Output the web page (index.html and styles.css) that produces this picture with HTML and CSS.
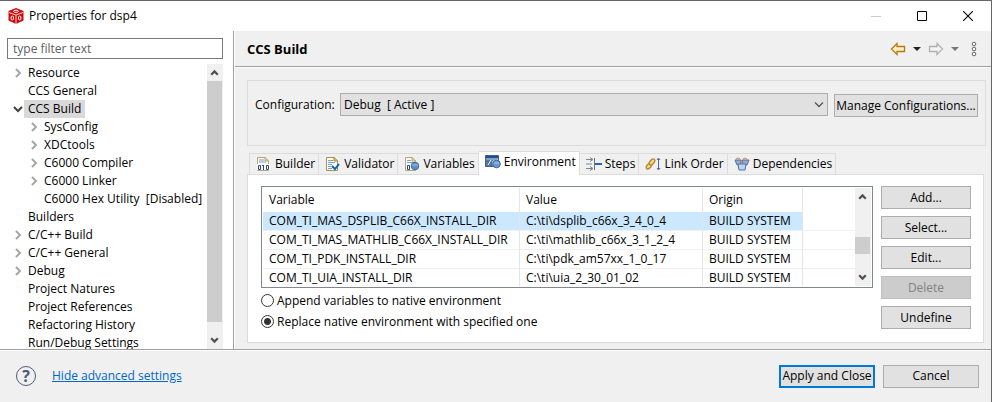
FILE: index.html
```
<!DOCTYPE html>
<html lang="en">
<head>
    <meta charset="UTF-8">
    <meta name="viewport" content="width=device-width, initial-scale=1.0">
    <title>Properties for dsp4</title>
    <link rel="stylesheet" href="styles.css">
</head>
<body>
    <!-- shared chevrons -->
    <svg class="defs" aria-hidden="true">
        <symbol id="chev-right" viewBox="0 0 8 10"><path d="M2 1l4 4-4 4" fill="none" stroke="#a6a6a6" stroke-width="2"/></symbol>
        <symbol id="chev-open" viewBox="0 0 10 8"><path d="M1 2l4 4 4-4" fill="none" stroke="#404040" stroke-width="2"/></symbol>
        <symbol id="chev-up" viewBox="0 0 10 8"><path d="M2 6l3-3 3 3" fill="none" stroke="#505050" stroke-width="2"/></symbol>
        <symbol id="chev-down" viewBox="0 0 10 8"><path d="M2 2l3 3 3-3" fill="none" stroke="#505050" stroke-width="2"/></symbol>
    </svg>

    <div class="window">
        <header class="titlebar">
            <svg class="app-icon" viewBox="0 0 16 16">
                <path d="M8 0l7.500 3v9.500L8 16 .5 12.500V3z" fill="#cc0a0a"/>
                <path d="M1 4.500l7 2.500 7-2.500M8 7v9" fill="none" stroke="#fff" stroke-width=".8"/>
                <ellipse cx="8" cy="3.300" rx="2.500" ry="1.100" fill="none" stroke="#fff"/>
                <ellipse cx="4.300" cy="10" rx="1.300" ry="2" fill="none" stroke="#fff"/>
                <ellipse cx="11.700" cy="10" rx="1.300" ry="2" fill="none" stroke="#fff"/>
            </svg>
            <h1 class="title">Properties for dsp4</h1>
            <div class="window-controls">
                <button aria-label="Minimize" disabled><svg width="10" height="10"><path d="M0 5.500h10" stroke="#ccc"/></svg></button>
                <button aria-label="Maximize"><svg width="10" height="10"><path d="M.5.5h9v9h-9z" fill="none" stroke="#000"/></svg></button>
                <button aria-label="Close"><svg width="10" height="10"><path d="M0 0l10 10M10 0L0 10" stroke="#000" stroke-width="1.100"/></svg></button>
            </div>
        </header>

        <main class="main">
            <nav class="sidebar">
                <input class="filter" type="text" placeholder="type filter text" aria-label="Filter">
                <div class="tree-box">
                    <ul class="tree">
                        <li><svg class="twist"><use href="#chev-right"/></svg><span>Resource</span></li>
                        <li><i class="twist"></i><span>CCS General</span></li>
                        <li><svg class="twist open"><use href="#chev-open"/></svg><span class="selected">CCS Build</span></li>
                        <li class="child"><svg class="twist"><use href="#chev-right"/></svg><span>SysConfig</span></li>
                        <li class="child"><svg class="twist"><use href="#chev-right"/></svg><span>XDCtools</span></li>
                        <li class="child"><svg class="twist"><use href="#chev-right"/></svg><span>C6000 Compiler</span></li>
                        <li class="child"><svg class="twist"><use href="#chev-right"/></svg><span>C6000 Linker</span></li>
                        <li class="child"><i class="twist"></i><span>C6000 Hex Utility&nbsp; [Disabled]</span></li>
                        <li><i class="twist"></i><span>Builders</span></li>
                        <li><svg class="twist"><use href="#chev-right"/></svg><span>C/C++ Build</span></li>
                        <li><svg class="twist"><use href="#chev-right"/></svg><span>C/C++ General</span></li>
                        <li><svg class="twist"><use href="#chev-right"/></svg><span>Debug</span></li>
                        <li><i class="twist"></i><span>Project Natures</span></li>
                        <li><i class="twist"></i><span>Project References</span></li>
                        <li><i class="twist"></i><span>Refactoring History</span></li>
                        <li><i class="twist"></i><span>Run/Debug Settings</span></li>
                    </ul>
                    <div class="scrollbar">
                        <svg class="arrow"><use href="#chev-up"/></svg>
                        <div class="track"><div class="thumb tree-thumb"></div></div>
                        <svg class="arrow"><use href="#chev-down"/></svg>
                    </div>
                </div>
            </nav>

            <section class="page">
                <div class="page-header">
                    <h2>CCS Build</h2>
                    <div class="history">
                        <button aria-label="Back"><svg width="16" height="14" viewBox="0 0 16 14"><path d="M1.500 7L7 1.500v3h7.500v5H7v3z" fill="#fff1c4" stroke="#b9770e" stroke-width="1.300"/></svg></button>
                        <button aria-label="Back history"><svg width="8" height="4"><path d="M0 0h8L4 4z" fill="#222"/></svg></button>
                        <button aria-label="Forward"><svg width="16" height="14" viewBox="0 0 16 14"><path d="M14.500 7L9 1.500v3H1.500v5H9v3z" fill="#f4f4f4" stroke="#b0b0b0" stroke-width="1.300"/></svg></button>
                        <button aria-label="Forward history"><svg width="8" height="4"><path d="M0 0h8L4 4z" fill="#777"/></svg></button>
                        <button class="menu" aria-label="Menu"><svg width="6" height="16" viewBox="0 0 6 16" fill="#fff" stroke="#666"><circle cx="3" cy="3" r="1.800"/><circle cx="3" cy="8" r="1.800"/><circle cx="3" cy="13" r="1.800"/></svg></button>
                    </div>
                </div>

                <div class="config">
                    <label for="config">Configuration:</label>
                    <div class="select-wrap">
                        <select id="config"><option>Debug&nbsp; [ Active ]</option></select>
                        <svg class="select-arrow" width="10" height="6"><path d="M1 .5l4 4 4-4" fill="none" stroke="#555" stroke-width="1.300"/></svg>
                    </div>
                    <button class="btn manage">Manage Configurations...</button>
                </div>

                <div class="tabs" role="tablist">
                    <button class="tab" role="tab">
                        <svg viewBox="0 0 16 16"><path d="M1.500 1.500h8l3 3v10h-11z" fill="#fbf9ee" stroke="#b5a782"/><path d="M9 1v4h4" fill="#e6cd84" stroke="#b5a782"/><path d="M3 4h5M3 6h7" stroke="#7d9fcb"/><path d="M1 8h13v6H1z" fill="#fff"/><path d="M2.500 9.500h2v4h-2zM10.500 9.500h2v4h-2zM7.500 9v5M6 9.500h1" fill="none" stroke="#274b85"/></svg>
                        Builder
                    </button>
                    <button class="tab" role="tab">
                        <svg viewBox="0 0 16 16"><path d="M1.500 1.500h8l3 3v10h-11z" fill="#fbf9ee" stroke="#a3915f"/><path d="M9 1v4h4" fill="#e6b95c" stroke="#b08838"/><path d="M3 4.500h5M3 6.500h7M3 8.500h4M3 10.500h3M3 12.500h4" stroke="#7d9fcb"/><path d="M7 10l3 3 4-5" fill="none" stroke="#0b63b5" stroke-width="2"/></svg>
                        Validator
                    </button>
                    <button class="tab" role="tab">
                        <svg viewBox="0 0 16 16"><path d="M1.500 1.500h7l3 3v10h-10z" fill="#fbf9ee" stroke="#b5a782"/><path d="M8 1v4h4" fill="#e6cd84" stroke="#b5a782"/><path d="M3 4.500h4M3 6.500h6" stroke="#7d9fcb"/><path d="M3.500 9.500h2v4h-2z" fill="#fff" stroke="#274b85"/><circle cx="11" cy="10" r="3.800" fill="#5f8fc5" stroke="#3b6aa5"/><path d="M8 9h6" stroke="#9fc0e4"/></svg>
                        Variables
                    </button>
                    <button class="tab active" role="tab" aria-selected="true">
                        <svg viewBox="0 0 16 16"><path d="M.5 1.500h13v11H.5z" fill="#55779f" stroke="#3f5f8d"/><path d="M1 2h12v2H1z" fill="#1e4f91"/><path d="M1 5h12" stroke="#b9cbe0"/><path d="M3 11l3-5M8 11V7l5-1" fill="none" stroke="#fff"/><circle cx="11.500" cy="10" r="3.800" fill="#6a9acd" stroke="#3b6aa5"/><path d="M9 9h5" stroke="#a7c6e8"/></svg>
                        Environment
                    </button>
                    <button class="tab" role="tab">
                        <svg viewBox="0 0 16 16"><path d="M0 3.500h6M0 8h6M0 12.500h6M4 1.500l3 2-3 2M4 10.500l3 2-3 2" fill="none" stroke="#7b858c"/><path d="M8.500 2v12" stroke="#6b757c"/><path d="M9 8h7" stroke="#2166ad" stroke-width="2"/></svg>
                        Steps
                    </button>
                    <button class="tab" role="tab">
                        <svg viewBox="0 0 16 16"><g fill="#f3d98e" stroke="#b5882a" stroke-width="1.300"><ellipse cx="4" cy="10" rx="3.500" ry="2" transform="rotate(-50 4 10)"/><ellipse cx="7" cy="6" rx="3.500" ry="2" transform="rotate(-50 7 6)"/></g><path d="M13.500 3v10M12 4l1.500-2L15 4M12 12l1.500 2 1.500-2" fill="none" stroke="#4c6c9d"/></svg>
                        Link Order
                    </button>
                    <button class="tab" role="tab">
                        <svg viewBox="0 0 16 16"><g stroke="#586f9f"><path d="M1 4h6v5H3z" fill="#94abd1"/><path d="M8 4h7l-2 5H9z" fill="#94abd1"/><path d="M4 8h8l-1 6H5z" fill="#b7d7f4"/></g><path d="M2 3q2-2 4 0M9 3q2-2 4 0M6 7q2-2 4 0" fill="none" stroke="#c18d5f"/></svg>
                        Dependencies
                    </button>
                </div>

                <div class="panel">
                    <div class="panel-left">
                        <div class="table-box">
                            <div class="table-view">
                                <table>
                                    <colgroup><col class="col-var"><col class="col-val"><col class="col-origin"><col></colgroup>
                                    <thead>
                                        <tr><th>Variable</th><th>Value</th><th>Origin</th><th></th></tr>
                                    </thead>
                                    <tbody>
                                        <tr class="selected"><td>COM_TI_MAS_DSPLIB_C66X_INSTALL_DIR</td><td>C:\ti\dsplib_c66x_3_4_0_4</td><td>BUILD SYSTEM</td><td></td></tr>
                                        <tr><td>COM_TI_MAS_MATHLIB_C66X_INSTALL_DIR</td><td>C:\ti\mathlib_c66x_3_1_2_4</td><td>BUILD SYSTEM</td><td></td></tr>
                                        <tr><td>COM_TI_PDK_INSTALL_DIR</td><td>C:\ti\pdk_am57xx_1_0_17</td><td>BUILD SYSTEM</td><td></td></tr>
                                        <tr><td>COM_TI_UIA_INSTALL_DIR</td><td>C:\ti\uia_2_30_01_02</td><td>BUILD SYSTEM</td><td></td></tr>
                                    </tbody>
                                </table>
                            </div>
                            <div class="scrollbar">
                                <svg class="arrow"><use href="#chev-up"/></svg>
                                <div class="track"><div class="thumb table-thumb"></div></div>
                                <svg class="arrow"><use href="#chev-down"/></svg>
                            </div>
                        </div>
                        <label class="radio"><input type="radio" name="env"> Append variables to native environment</label>
                        <label class="radio"><input type="radio" name="env" checked> Replace native environment with specified one</label>
                    </div>
                    <div class="actions">
                        <button class="btn">Add...</button>
                        <button class="btn">Select...</button>
                        <button class="btn">Edit...</button>
                        <button class="btn" disabled>Delete</button>
                        <button class="btn">Undefine</button>
                    </div>
                </div>
            </section>
        </main>

        <footer class="footer">
            <button class="help" aria-label="Help">?</button>
            <a href="#">Hide advanced settings</a>
            <div class="footer-buttons">
                <button class="btn primary">Apply and Close</button>
                <button class="btn">Cancel</button>
            </div>
        </footer>
    </div>
</body>
</html>
```
FILE: styles.css
```
* {
    margin: 0;
    padding: 0;
    box-sizing: border-box;
}

body,
button,
input,
select {
    font-family: "Open Sans", "Noto Sans", sans-serif;
    font-size: 12px;
    line-height: 18px;
    color: #000;
}

button {
    border: none;
    background: none;
    white-space: nowrap;
}

svg {
    display: block;
    flex: none;
}

.defs {
    position: absolute;
    width: 0;
    height: 0;
}

.window {
    display: flex;
    flex-direction: column;
    height: 100vh;
    background: #f0f0f0;
    border-top: 1px solid #666;
    border-right: 1px solid #666;
    overflow: hidden;
}

/* title bar */
.titlebar {
    display: flex;
    align-items: center;
    flex: none;
    height: 30px;
    padding-left: 8px;
    gap: 5px;
    background: #fff;
}

.app-icon {
    width: 16px;
    height: 16px;
}

.title {
    font-size: 12px;
    font-weight: normal;
}

.window-controls {
    display: flex;
    margin-left: auto;
}

.window-controls button {
    display: flex;
    align-items: center;
    justify-content: center;
    width: 46px;
    height: 28px;
}

.main {
    display: flex;
    flex: 1;
    min-height: 0;
}

/* category tree */
.sidebar {
    display: flex;
    flex-direction: column;
    flex: none;
    width: 234px;
    padding: 7px 10px 0 7px;
    background: #fff;
    border-right: 1px solid #a0a0a0;
}

.filter {
    flex: none;
    height: 21px;
    padding: 0 5px;
    border: 1px solid #7a7a7a;
}

.filter::placeholder {
    color: #606060;
    opacity: 1;
}

.tree-box {
    display: flex;
    flex: 1;
    min-height: 0;
    padding-top: 5px;
}

.tree {
    flex: 1;
    min-width: 0;
    overflow: hidden;
    list-style: none;
}

.tree li {
    display: flex;
    align-items: center;
    height: 18px;
    padding-left: 6px;
    gap: 1px;
    white-space: nowrap;
}

.tree .child {
    padding-left: 22px;
}

.tree span {
    padding: 0 4px;
}

.tree .selected {
    background: #d9d9d9;
}

.twist {
    width: 10px;
    height: 10px;
}

.scrollbar {
    display: flex;
    flex-direction: column;
    flex: none;
    width: 16px;
    background: #f0f0f0;
}

.arrow {
    width: 15px;
    height: 17px;
    padding: 4px 2px;
}

.track {
    flex: 1;
    display: flex;
    flex-direction: column;
}

.thumb {
    width: 15px;
    background: #cdcdcd;
}

.tree-thumb {
    height: 96%;
}

.table-thumb {
    height: 17px;
    margin-top: 32px;
}

/* page */
.page {
    flex: 1;
    min-width: 0;
    padding-right: 5px;
    border-left: 1px solid #fff;
}

.page-header {
    display: flex;
    align-items: center;
    justify-content: space-between;
    height: 36px;
    margin-right: -5px;
    padding: 0 14px 0 12px;
    border-bottom: 1px solid #a0a0a0;
    box-shadow: 0 1px #fff;
}

.page-header h2 {
    font-size: 13px;
}

.history {
    display: flex;
    align-items: center;
    gap: 7px;
}

.history .menu {
    margin-left: 5px;
}

.config {
    display: flex;
    align-items: flex-start;
    height: 66px;
    margin: 13px 0 5px 12px;
    padding: 12px 7px;
    gap: 6px;
    border: 1px solid #dcdcdc;
}

.config label {
    width: 79px;
    padding-top: 3px;
}

.select-wrap {
    position: relative;
    flex: 1;
}

.select-wrap select {
    display: block;
    width: 100%;
    height: 23px;
    padding: 0 3px;
    border: 1px solid #adadad;
    background: #e1e1e1;
    appearance: none;
}

.select-arrow {
    position: absolute;
    top: 9px;
    right: 4px;
}

.btn {
    height: 23px;
    border: 1px solid #adadad;
    background: #e1e1e1;
    line-height: 20px;
}

.btn:disabled {
    background: #ccc;
    border-color: #bfbfbf;
    color: #838383;
}

.manage {
    width: 144px;
    margin-top: 1px;
}

/* tabs */
.tabs {
    display: flex;
    align-items: flex-end;
    height: 23px;
    margin-left: 14px;
}

.tab {
    display: flex;
    align-items: center;
    height: 21px;
    padding: 0 3px 0 6px;
    gap: 3px;
    border: 1px solid #dcdcdc;
    border-width: 1px 1px 0 0;
}

.tab:first-child {
    border-left-width: 1px;
}

.tab.active {
    position: relative;
    height: 24px;
    padding-bottom: 3px;
    margin-bottom: -1px;
    background: #fff;
}

.tab svg {
    width: 16px;
    height: 16px;
}

.panel {
    display: flex;
    gap: 8px;
    margin: 0 2px 0 12px;
    padding: 11px 12px 10px 13px;
    background: #fff;
    border: 1px solid #dcdcdc;
}

.panel-left {
    flex: 1;
    min-width: 0;
}

.table-box {
    display: flex;
    height: 102px;
    padding: 1px;
    border: 1px solid #828790;
    margin-bottom: 2px;
}

.table-view {
    flex: 1;
    min-width: 0;
    overflow: hidden;
}

table {
    width: 100%;
    table-layout: fixed;
    border-collapse: separate;
    border-spacing: 0;
}

.col-var {
    width: 257px;
}

.col-val {
    width: 183px;
}

.col-origin {
    width: 100px;
}

th,
td {
    padding: 0 6px;
    border-right: 1px solid #e5e5e5;
    font-weight: normal;
    text-align: left;
    white-space: nowrap;
}

th {
    height: 24px;
}

td {
    height: 19px;
    border-bottom: 1px solid #f0f0f0;
}

th:last-child,
td:last-child {
    border-right: none;
}

.selected td:not(:last-child) {
    background: #cce8ff;
}

.radio {
    display: flex;
    align-items: center;
    height: 21px;
    gap: 3px;
}

.radio input {
    appearance: none;
    width: 13px;
    height: 13px;
    border: 1px solid #333;
    border-radius: 50%;
    background: #fff;
}

.radio input:checked {
    background: radial-gradient(circle, #333 3px, #fff 4px);
}

.actions {
    display: flex;
    flex-direction: column;
    gap: 7px;
}

.actions .btn {
    width: 90px;
}

/* footer */
.footer {
    display: flex;
    align-items: center;
    flex: none;
    height: 53px;
    padding: 0 12px 0 16px;
    border-top: 1px solid #a0a0a0;
    box-shadow: inset 0 1px #fff;
}

.help {
    width: 20px;
    height: 20px;
    margin-right: 16px;
    border: 1px solid #4d5b7c;
    border-radius: 50%;
    font-size: 16px;
    font-weight: bold;
    color: #4d5b7c;
}

.footer a {
    color: #0066cc;
}

.footer-buttons {
    display: flex;
    gap: 8px;
    margin-left: auto;
}

.footer-buttons .btn {
    width: 96px;
}

.primary {
    border: 2px solid #0078d7;
    line-height: 18px;
}
```
